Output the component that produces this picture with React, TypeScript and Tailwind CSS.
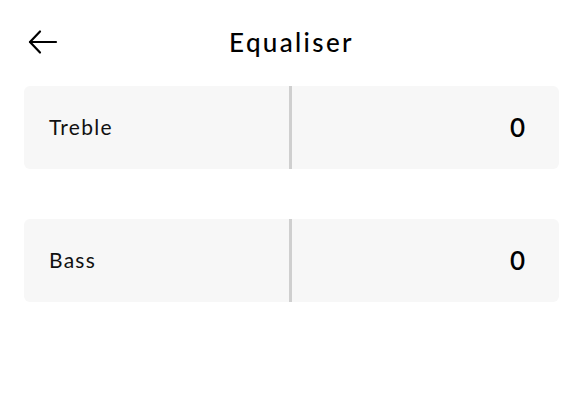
type Band = { label: string; value: number };

const bands: Band[] = [
  { label: "Treble", value: 0 },
  { label: "Bass", value: 0 },
];

function BackArrow() {
  return (
    <svg width="30" height="26" viewBox="0 0 30 26" fill="none" stroke="currentColor" strokeWidth="2.2" strokeLinecap="round" strokeLinejoin="round">
      <path d="M28 13H2" />
      <path d="M12 2.5 2 13l10 10.5" />
    </svg>
  );
}

function BandRow({ band }: { band: Band }) {
  return (
    <div className="flex h-[83px] rounded-md bg-[#f7f7f7]">
      <div className="flex w-[265px] items-center pb-[2px] pl-[25px] text-[21px] tracking-[0.06em] text-[#111]">
        {band.label}
      </div>
      <div className="w-[3px] bg-[#cfcfcf]" />
      <div className="flex flex-1 items-center justify-end pr-[34px] text-[26px] font-semibold text-black">
        {band.value}
      </div>
    </div>
  );
}

export default function App() {
  return (
    <div
      className="h-[400px] w-[583px] bg-white"
      style={{ fontFamily: "'Lato', 'Noto Sans', sans-serif" }}
    >
      <header className="relative flex h-[86px] items-center justify-center">
        <button className="absolute left-[28px] top-[29px] text-black">
          <BackArrow />
        </button>
        <h1 className="-mt-[2px] text-[26px] font-medium tracking-[0.09em] text-black">
          Equaliser
        </h1>
      </header>
      <div className="flex flex-col gap-[50px] px-[24px]">
        {bands.map((b) => (
          <BandRow key={b.label} band={b} />
        ))}
      </div>
    </div>
  );
}
